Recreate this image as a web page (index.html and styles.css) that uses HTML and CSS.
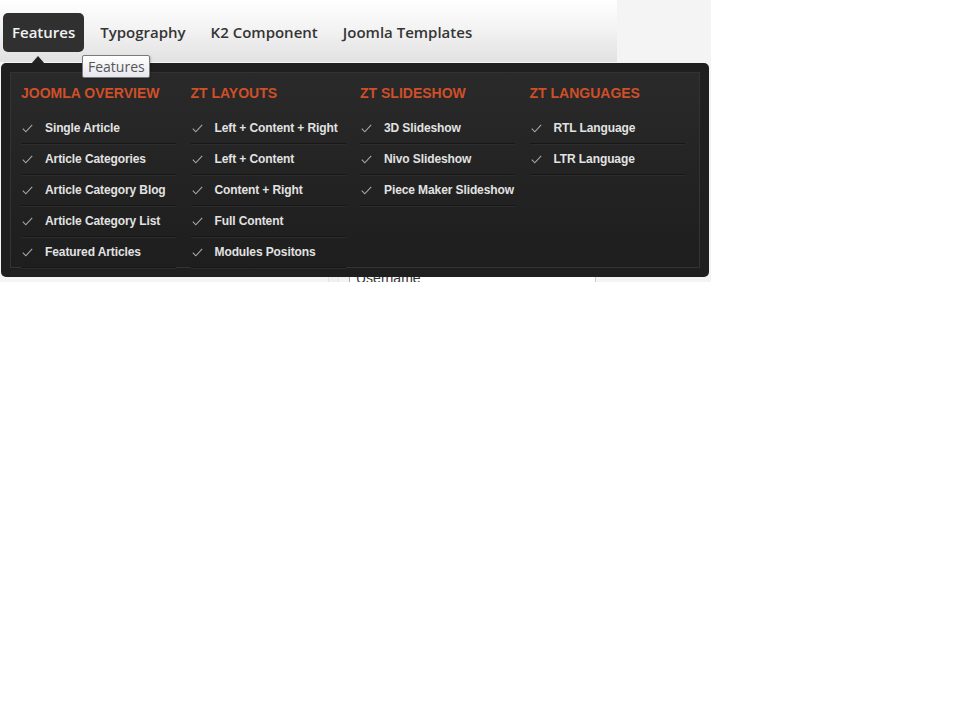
FILE: index.html
```html
<!DOCTYPE html>
<html lang="en">
  <head>
    <meta charset="UTF-8" />
    <title>Features menu</title>
    <link rel="stylesheet" href="styles.css">
  </head>

  <body>
    <div class="page">
      <div class="header">
        <ul class="mainmenu">
          <li class="active">Features</li>
          <li>Typography</li>
          <li>K2 Component</li>
          <li>Joomla Templates</li>
        </ul>
      </div>

      <div class="content">
        <div class="login">
          <span class="login-mark"></span>
          <div class="login-box">Username</div>
        </div>
      </div>

      <span class="arrow"></span>
      <div class="tooltip">Features</div>

      <div class="dropdown">
        <div class="dropdown-inner">
          <div class="column">
            <h3>Joomla Overview</h3>
            <ul>
              <li><span class="check"></span>Single Article</li>
              <li><span class="check"></span>Article Categories</li>
              <li><span class="check"></span>Article Category Blog</li>
              <li><span class="check"></span>Article Category List</li>
              <li><span class="check"></span>Featured Articles</li>
            </ul>
          </div>
          <div class="column">
            <h3>ZT Layouts</h3>
            <ul>
              <li><span class="check"></span>Left + Content + Right</li>
              <li><span class="check"></span>Left + Content</li>
              <li><span class="check"></span>Content + Right</li>
              <li><span class="check"></span>Full Content</li>
              <li><span class="check"></span>Modules Positons</li>
            </ul>
          </div>
          <div class="column">
            <h3>ZT Slideshow</h3>
            <ul>
              <li><span class="check"></span>3D Slideshow</li>
              <li><span class="check"></span>Nivo Slideshow</li>
              <li><span class="check"></span>Piece Maker Slideshow</li>
            </ul>
          </div>
          <div class="column">
            <h3>ZT Languages</h3>
            <ul>
              <li><span class="check"></span>RTL Language</li>
              <li><span class="check"></span>LTR Language</li>
            </ul>
          </div>
        </div>
      </div>
    </div>

    <script>
      // swap the empty spans for the little check mark
      const checkSvg =
        '<svg width="11" height="9" viewBox="0 0 11 9"><path d="M0.8 4.6 L3.8 7.8 L10.2 0.8" fill="none" stroke="#a8a8a8" stroke-width="1.1"/></svg>';
      document.querySelectorAll(".check").forEach((el) => {
        el.innerHTML = checkSvg;
      });
    </script>
  </body>
</html>
```

FILE: styles.css
```css
* {
  box-sizing: border-box;
  margin: 0;
  padding: 0;
}

body {
  background: #fff;
  font-family: "Liberation Sans", Arial, sans-serif;
}

.page {
  position: relative;
  width: 711px;
  height: 282px;
  background: #f4f4f4;
  overflow: hidden;
}

.header {
  width: 617px;
  height: 62px;
  background: linear-gradient(180deg, #ffffff 0%, #f2f2f2 50%, #e1e1e1 100%);
}

.mainmenu {
  display: flex;
  gap: 7px;
  list-style: none;
  padding: 13px 0 0 3px;
}

.mainmenu li {
  height: 39px;
  line-height: 39px;
  padding: 0 9px;
  border-radius: 5px;
  font-family: "Open Sans", "DejaVu Sans", sans-serif;
  font-size: 15px;
  font-weight: 600;
  color: #353535;
}

.mainmenu li.active {
  background: #303030;
  color: #f2f2f2;
}

.content {
  display: flex;
  padding: 206px 0 0 328px;
}

.login {
  display: flex;
  gap: 10px;
}

.login-mark {
  width: 11px;
  height: 11px;
  margin-top: 6px;
  border: 1px solid #e4e4e4;
  background: #f0f0f0;
}

.login-box {
  width: 247px;
  height: 40px;
  padding: 2px 0 0 6px;
  border-left: 1px solid #aaa;
  border-right: 1px solid #ccc;
  background: #fff;
  font-size: 14px;
  color: #333;
}

.arrow {
  position: absolute;
  left: 31px;
  top: 56px;
  width: 0;
  height: 0;
  border-left: 7px solid transparent;
  border-right: 7px solid transparent;
  border-bottom: 8px solid #222;
}

.tooltip {
  position: absolute;
  left: 82px;
  top: 55px;
  width: 68px;
  height: 23px;
  line-height: 21px;
  padding-left: 5px;
  border: 1px solid #7a7a7a;
  border-radius: 2px;
  background: linear-gradient(180deg, #ffffff, #e6e6ee);
  box-shadow: 1px 1px 2px rgba(0, 0, 0, 0.2);
  font-family: "Open Sans", "DejaVu Sans", sans-serif;
  font-size: 14px;
  color: #575757;
  z-index: 2;
}

.dropdown {
  position: absolute;
  left: 1px;
  top: 63px;
  width: 708px;
  height: 214px;
  padding: 9px;
  border-radius: 5px;
  background: #1f1f1f;
}

.dropdown-inner {
  display: flex;
  height: 196px;
  padding: 12px 0 0 10px;
  border: 1px solid #333;
  background: linear-gradient(180deg, #2a2a2a 0%, #222 60%, #1e1e1e 100%);
}

.column {
  width: 170px;
}

.column h3 {
  height: 16px;
  line-height: 16px;
  margin-bottom: 12px;
  font-size: 14px;
  font-weight: bold;
  text-transform: uppercase;
  color: #cf4f28;
}

.column ul {
  list-style: none;
  width: 155px;
}

.column li {
  display: flex;
  align-items: center;
  height: 31px;
  border-bottom: 1px solid #171717;
  box-shadow: 0 1px 0 #2c2c2c;
  font-size: 12px;
  font-weight: bold;
  letter-spacing: -0.1px;
  white-space: nowrap;
  color: #e2e2e2;
}

.check {
  display: flex;
  width: 24px;
  padding-left: 1px;
}
```
